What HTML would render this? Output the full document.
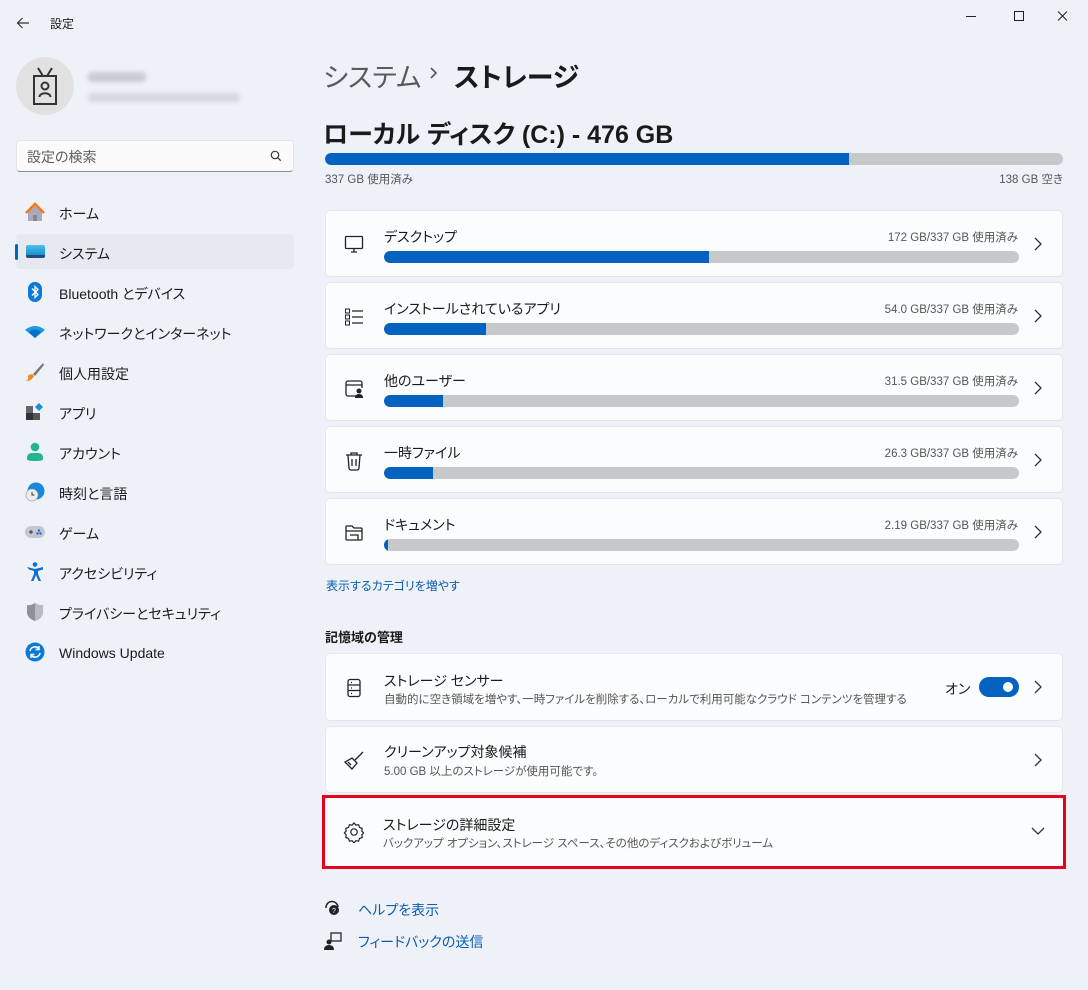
<!DOCTYPE html>
<html><head><meta charset="utf-8"><style>
*{margin:0;padding:0;box-sizing:border-box}
body{width:1088px;height:990px;background:#eef2f8;font-family:"Liberation Sans","Noto Sans CJK JP",sans-serif;font-feature-settings:"palt";color:#1a1a1a;position:relative;overflow:hidden}
.a{position:absolute;white-space:nowrap}
.nav{position:absolute;left:59px;font-size:14px;color:#1a1a1a;white-space:nowrap}
.ni{position:absolute;left:25px;width:20px;height:20px}
.card{position:absolute;left:325px;width:738px;background:#fbfcfd;border:1px solid #e3e6ea;border-radius:5px}
.bar{position:absolute;height:12px;border-radius:6px;background:#c6c8ca;overflow:hidden}
.bar i{position:absolute;left:0;top:0;bottom:0;background:#0262c0;border-radius:6px 0 0 6px}
.t{position:absolute;left:58px;font-size:14px;white-space:nowrap}
.s{position:absolute;font-size:11.5px;color:#555;white-space:nowrap}
.chev{position:absolute;right:18px;width:12px;height:14px}
.ic{position:absolute;left:18px;width:20px;height:20px}
</style></head><body>
<svg class="a" style="left:15px;top:15px" width="16" height="16" viewBox="0 0 16 16"><path d="M14 8H2.5M7.5 3L2.5 8l5 5" stroke="#333" stroke-width="1.2" fill="none"/></svg>
<div class="a" style="left:50px;top:15px;font-size:12px">設定</div>
<svg class="a" style="left:966px;top:10px" width="104" height="12" viewBox="0 0 104 12"><path d="M0 6.5h10" stroke="#222" stroke-width="1"/><rect x="48.5" y="1.5" width="9" height="9" fill="none" stroke="#222"/><path d="M92 1.5l9 9M101 1.5l-9 9" stroke="#222"/></svg>
<div class="a" style="left:16px;top:57px;width:58px;height:58px;border-radius:50%;background:#e1e1e1"></div>
<svg class="a" style="left:31px;top:64px" width="28" height="44" viewBox="0 0 28 44"><path d="M7 4l5 8M21 4l-5 8" stroke="#333" stroke-width="2" fill="none"/><rect x="3" y="12" width="22" height="28" fill="none" stroke="#333" stroke-width="2"/><circle cx="14" cy="22" r="3.5" fill="none" stroke="#333" stroke-width="2"/><path d="M8.5 33c0-5 11-5 11 0" fill="none" stroke="#333" stroke-width="2"/></svg>
<div class="a" style="left:88px;top:72px;width:58px;height:10px;background:#c9ccd2;border-radius:4px;filter:blur(2px)"></div>
<div class="a" style="left:88px;top:93px;width:152px;height:9px;background:#d5d8de;border-radius:4px;filter:blur(2px)"></div>
<div class="a" style="left:16px;top:140px;width:278px;height:32px;background:#fbfbfc;border:1px solid #e3e5e8;border-bottom:1px solid #8a8a8a;border-radius:4px"></div>
<div class="a" style="left:27px;top:147px;font-size:14px;color:#5c5c5c">設定の検索</div>
<svg class="a" style="left:270px;top:150px" width="12" height="12" viewBox="0 0 12 12"><circle cx="5" cy="5" r="3.7" fill="none" stroke="#333" stroke-width="1.2"/><path d="M7.7 7.7l3 3" stroke="#333" stroke-width="1.2"/></svg>
<div class="a" style="left:16px;top:234px;width:278px;height:35px;background:#e6e9ef;border-radius:4px"></div>
<div class="a" style="left:15px;top:244px;width:3px;height:16px;background:#0067c0;border-radius:2px"></div>
<svg class="ni" style="top:202px" viewBox="0 0 20 20"><path d="M3 10v9h14v-9L10 4z" fill="#aab"/><path d="M1 11L10 2l9 9" stroke="#f07a1a" stroke-width="2.6" fill="none"/><rect x="8" y="13" width="4" height="6" fill="#888"/></svg>
<div class="nav" style="top:204px">ホーム</div>
<div class="a" style="left:26px;top:245px;width:19px;height:13px;background:linear-gradient(#49c3ea,#1a8fd0);border-radius:2px;border-bottom:3px solid #1a4f80"></div>
<div class="nav" style="top:244px">システム</div>
<svg class="ni" style="top:282px" viewBox="0 0 20 20"><rect x="3" y="0" width="14" height="20" rx="7" fill="#0a7ad9"/><path d="M7 6.5l6 6-3 3v-11l3 3-6 6" stroke="#fff" stroke-width="1.3" fill="none"/></svg>
<div class="nav" style="top:284px">Bluetooth とデバイス</div>
<svg class="ni" style="top:322px" viewBox="0 0 20 20"><path d="M0 8q10-8 20 0l-10 8z" fill="#1a9ae0"/><path d="M4 10q6-5 12 0l-6 6z" fill="#0a6dc4"/></svg>
<div class="nav" style="top:324px">ネットワークとインターネット</div>
<svg class="ni" style="top:362px" viewBox="0 0 20 20"><path d="M18 1L8 12l2 2L19 3z" fill="#777"/><path d="M7 12l2 2q-2 5-8 5q3-2 2-4t4-3z" fill="#f08a20"/></svg>
<div class="nav" style="top:364px">個人用設定</div>
<svg class="ni" style="top:402px" viewBox="0 0 20 20"><rect x="1" y="4" width="7" height="7" fill="#666"/><rect x="1" y="11" width="7" height="7" fill="#333"/><rect x="8" y="11" width="7" height="7" fill="#555"/><path d="M14 1l4 4-4 4-4-4z" fill="#1a8fe0"/></svg>
<div class="nav" style="top:404px">アプリ</div>
<svg class="ni" style="top:442px" viewBox="0 0 20 20"><circle cx="10" cy="5" r="4.3" fill="#22b58c"/><path d="M2 16q0-5 5-5h6q5 0 5 5v1q0 2-8 2t-8-2z" fill="#22b58c"/></svg>
<div class="nav" style="top:444px">アカウント</div>
<svg class="ni" style="top:482px" viewBox="0 0 20 20"><circle cx="11" cy="9" r="8.5" fill="#1a8ad8"/><circle cx="7" cy="13" r="6" fill="#eee" stroke="#999" stroke-width=".6"/><path d="M7 10v3h2.5" stroke="#333" fill="none"/></svg>
<div class="nav" style="top:484px">時刻と言語</div>
<svg class="ni" style="top:522px" viewBox="0 0 20 20"><rect x="0" y="4" width="20" height="12" rx="6" fill="#c4c8cc"/><path d="M4 10h4M6 8v4" stroke="#333"/><circle cx="14" cy="8.5" r="1.2" fill="#1a6ad0"/><circle cx="12.5" cy="11.5" r="1.2" fill="#1a6ad0"/><circle cx="15.5" cy="11.5" r="1.2" fill="#1a6ad0"/></svg>
<div class="nav" style="top:524px">ゲーム</div>
<svg class="ni" style="top:562px" viewBox="0 0 20 20"><circle cx="10" cy="2.5" r="2.3" fill="#0a70d0"/><path d="M2 5l8 2 8-2v2.5l-5 1.5v3l3 7h-2.5l-2.5-6-2.5 6h-2.5l3-7v-3l-5-1.5z" fill="#0a70d0"/></svg>
<div class="nav" style="top:564px">アクセシビリティ</div>
<svg class="ni" style="top:602px" viewBox="0 0 20 20"><path d="M10 1q5 3 8 2v7q0 6-8 9-8-3-8-9V3q3 1 8-2z" fill="#8e9298"/><path d="M10 1q5 3 8 2v7q0 6-8 9z" fill="#b8bcc0"/></svg>
<div class="nav" style="top:604px">プライバシーとセキュリティ</div>
<svg class="ni" style="top:642px" viewBox="0 0 20 20"><circle cx="10" cy="10" r="9.5" fill="#0a7ad9"/><path d="M5 9a5 5 0 0 1 9-2M15 11a5 5 0 0 1-9 2" stroke="#fff" stroke-width="1.6" fill="none"/><path d="M14 4v3.5h-3.5M6 16v-3.5h3.5" stroke="#fff" stroke-width="1.4" fill="none"/></svg>
<div class="nav" style="top:645px">Windows Update</div>
<div class="a" style="left:323px;top:56px;font-size:27px;color:#5a5a5a">システム</div>
<svg class="a" style="left:429px;top:66px" width="10" height="14" viewBox="0 0 10 14"><path d="M2 2l5 5-5 5" stroke="#555" stroke-width="1.6" fill="none"/></svg>
<div class="a" style="left:454px;top:56px;font-size:27px;font-weight:bold;color:#1a1a1a">ストレージ</div>
<div class="a" style="left:323px;top:115px;font-size:25px;font-weight:bold">ローカル ディスク (C:) - 476 GB</div>
<div class="bar" style="left:325px;top:153px;width:738px"><i style="width:524px"></i></div>
<div class="s" style="left:325px;top:171px">337 GB 使用済み</div>
<div class="s" style="right:25px;top:171px">138 GB 空き</div>
<div class="card" style="top:210px;height:67px">
<svg class="ic" style="top:23px" viewBox="0 0 20 20"><rect x="1.5" y="2.5" width="17" height="12" rx="1" fill="none" stroke="#222" stroke-width="1.3"/><path d="M7 18h6M10 15v3" stroke="#222" stroke-width="1.3"/></svg>
<div class="t" style="top:16px">デスクトップ</div><div class="s" style="right:44px;top:18px">172 GB/337 GB 使用済み</div>
<div class="bar" style="left:58px;top:40px;width:635px"><i style="width:325px"></i></div>
<svg class="chev" style="top:26px" viewBox="0 0 12 14"><path d="M3 1l6 6-6 6" stroke="#333" stroke-width="1.3" fill="none"/></svg></div>
<div class="card" style="top:282px;height:67px">
<svg class="ic" style="top:24px" viewBox="0 0 20 20"><rect x="1.5" y="2" width="4" height="4" fill="none" stroke="#222"/><rect x="1.5" y="8" width="4" height="4" fill="none" stroke="#222"/><rect x="1.5" y="14" width="4" height="4" fill="none" stroke="#222"/><path d="M8 4h11M8 10h11M8 16h11" stroke="#222" stroke-width="1.2"/></svg>
<div class="t" style="top:16px">インストールされているアプリ</div><div class="s" style="right:44px;top:18px">54.0 GB/337 GB 使用済み</div>
<div class="bar" style="left:58px;top:40px;width:635px"><i style="width:102px"></i></div>
<svg class="chev" style="top:26px" viewBox="0 0 12 14"><path d="M3 1l6 6-6 6" stroke="#333" stroke-width="1.3" fill="none"/></svg></div>
<div class="card" style="top:354px;height:67px">
<svg class="ic" style="top:24px" viewBox="0 0 20 20"><path d="M12 17H4a2 2 0 0 1-2-2V4a2 2 0 0 1 2-2h12a2 2 0 0 1 2 2v5M2 6h16" fill="none" stroke="#222" stroke-width="1.3"/><circle cx="15" cy="12" r="2.5" fill="#222"/><path d="M11 19q0-4 4-4t4 4z" fill="#222"/></svg>
<div class="t" style="top:16px">他のユーザー</div><div class="s" style="right:44px;top:18px">31.5 GB/337 GB 使用済み</div>
<div class="bar" style="left:58px;top:40px;width:635px"><i style="width:59px"></i></div>
<svg class="chev" style="top:26px" viewBox="0 0 12 14"><path d="M3 1l6 6-6 6" stroke="#333" stroke-width="1.3" fill="none"/></svg></div>
<div class="card" style="top:426px;height:67px">
<svg class="ic" style="top:24px" viewBox="0 0 20 20"><path d="M2 4h16M7 4V2h6v2M4 4l1 13a2 2 0 0 0 2 2h6a2 2 0 0 0 2-2l1-13M8 8v7M12 8v7" fill="none" stroke="#222" stroke-width="1.3"/></svg>
<div class="t" style="top:16px">一時ファイル</div><div class="s" style="right:44px;top:18px">26.3 GB/337 GB 使用済み</div>
<div class="bar" style="left:58px;top:40px;width:635px"><i style="width:49px"></i></div>
<svg class="chev" style="top:26px" viewBox="0 0 12 14"><path d="M3 1l6 6-6 6" stroke="#333" stroke-width="1.3" fill="none"/></svg></div>
<div class="card" style="top:498px;height:67px">
<svg class="ic" style="top:24px" viewBox="0 0 20 20"><path d="M2 16V4a1 1 0 0 1 1-1h5l2 2h7a1 1 0 0 1 1 1v10a1 1 0 0 1-1 1H3a1 1 0 0 1-1-1zM2 8h16M6 12h8v5" fill="none" stroke="#222" stroke-width="1.3"/></svg>
<div class="t" style="top:16px">ドキュメント</div><div class="s" style="right:44px;top:18px">2.19 GB/337 GB 使用済み</div>
<div class="bar" style="left:58px;top:40px;width:635px"><i style="width:4px"></i></div>
<svg class="chev" style="top:26px" viewBox="0 0 12 14"><path d="M3 1l6 6-6 6" stroke="#333" stroke-width="1.3" fill="none"/></svg></div>
<div class="a" style="left:326px;top:577px;font-size:12px;color:#0a5bb0">表示するカテゴリを増やす</div>
<div class="a" style="left:325px;top:627px;font-size:13px;font-weight:bold">記憶域の管理</div>
<div class="card" style="top:653px;height:68px">
<svg class="ic" style="top:24px" viewBox="0 0 20 20"><rect x="4" y="1.5" width="12" height="17" rx="2" fill="none" stroke="#222" stroke-width="1.3"/><path d="M4 7h12M4 12.5h12M7 4.5h1M7 10h1M7 15.5h1" stroke="#222" stroke-width="1.2"/></svg>
<div class="t" style="top:17px">ストレージ センサー</div>
<div class="s" style="left:58px;top:37px">自動的に空き領域を増やす、一時ファイルを削除する、ローカルで利用可能なクラウド コンテンツを管理する</div>
<div class="a" style="left:619px;top:25px;font-size:14px">オン</div>
<div class="a" style="left:653px;top:23px;width:40px;height:20px;border-radius:10px;background:#0262c0"></div>
<div class="a" style="left:677px;top:28px;width:10px;height:10px;border-radius:50%;background:#fff"></div>
<svg class="chev" style="top:26px" viewBox="0 0 12 14"><path d="M3 1l6 6-6 6" stroke="#333" stroke-width="1.3" fill="none"/></svg></div>
<div class="card" style="top:726px;height:67px">
<svg class="ic" style="top:24px" viewBox="0 0 20 20"><path d="M19 1l-8 8M8 7l5 5-5 6-7-7z M4 11l3 3" fill="none" stroke="#222" stroke-width="1.3"/></svg>
<div class="t" style="top:15px">クリーンアップ対象候補</div>
<div class="s" style="left:58px;top:36px">5.00 GB 以上のストレージが使用可能です。</div>
<svg class="chev" style="top:26px" viewBox="0 0 12 14"><path d="M3 1l6 6-6 6" stroke="#333" stroke-width="1.3" fill="none"/></svg></div>
<div class="card" style="top:798px;height:68px;border:none;background:#fbfcfd"></div>
<div class="a" style="left:322px;top:795px;width:744px;height:74px;border:3px solid #e8001c"></div>
<svg class="a" style="left:343px;top:821px" width="22" height="22" viewBox="0 0 24 24"><path d="M12 2l2 2.5 3-.5 1 3 3 1-.5 3 2 2-2 2 .5 3-3 1-1 3-3-.5-2 2.5-2-2.5-3 .5-1-3-3-1 .5-3-2-2 2-2-.5-3 3-1 1-3 3 .5z" fill="none" stroke="#222" stroke-width="1.3" stroke-linejoin="round"/><circle cx="12" cy="12" r="3.5" fill="none" stroke="#222" stroke-width="1.3"/></svg>
<div class="a" style="left:383px;top:815px;font-size:14px">ストレージの詳細設定</div>
<div class="s" style="left:383px;top:835px">バックアップ オプション、ストレージ スペース、その他のディスクおよびボリューム</div>
<svg class="a" style="left:1031px;top:825px" width="14" height="12" viewBox="0 0 14 12"><path d="M1 3l6 6 6-6" stroke="#333" stroke-width="1.3" fill="none"/></svg>
<svg class="a" style="left:324px;top:899px" width="18" height="18" viewBox="0 0 18 18"><path d="M2 9a6 6 0 0 1 12-1" fill="none" stroke="#222" stroke-width="1.5"/><circle cx="10" cy="11" r="5" fill="#222"/><text x="8" y="14" font-size="7" fill="#fff" font-family="Liberation Sans">?</text></svg>
<div class="a" style="left:358px;top:900px;font-size:14px;color:#0a5bb0">ヘルプを表示</div>
<svg class="a" style="left:324px;top:932px" width="18" height="18" viewBox="0 0 18 18"><rect x="7" y="1" width="10" height="8" fill="none" stroke="#222" stroke-width="1.3"/><circle cx="5" cy="10" r="2.5" fill="#222"/><path d="M0 18q0-5 5-5t5 5z" fill="#222"/></svg>
<div class="a" style="left:358px;top:932px;font-size:14px;color:#0a5bb0">フィードバックの送信</div>
</body></html>
